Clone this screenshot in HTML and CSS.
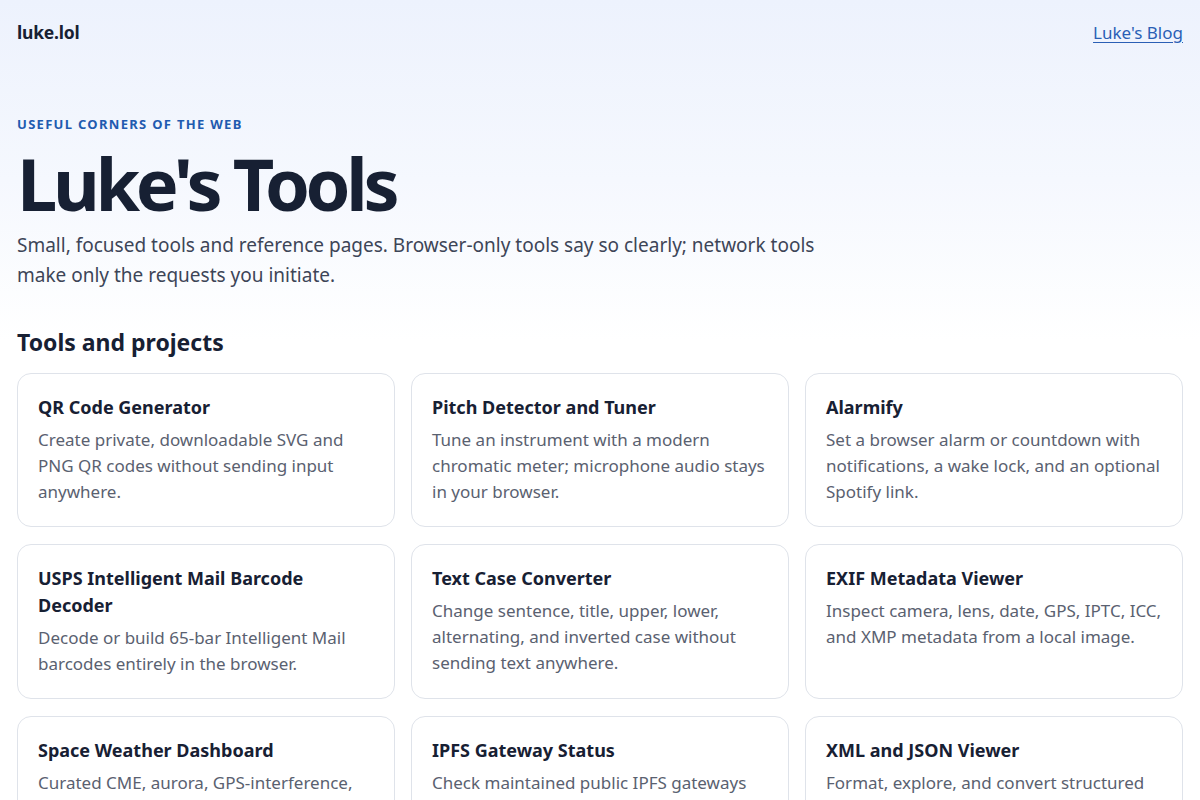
FILE: index.html
```html
<!DOCTYPE html>
<html lang="en">
<head>
<meta charset="utf-8">
<title>Luke's Tools</title>
<link rel="stylesheet" href="styles.css">
</head>
<body>
<div class="page">
  <header class="site-header">
    <a class="brand" href="#">luke.lol</a>
    <a class="blog-link" href="#">Luke's Blog</a>
  </header>
  <section class="hero">
    <p class="eyebrow">Useful corners of the web</p>
    <h1 class="title">Luke's Tools</h1>
    <p class="lede">Small, focused tools and reference pages. Browser-only tools say so clearly; network tools make only the requests you initiate.</p>
  </section>
  <section class="tools">
    <h2 class="section-title">Tools and projects</h2>
    <div class="grid">
      <a class="card" href="#">
        <h3 class="card-title">QR Code Generator</h3>
        <p class="card-desc">Create private, downloadable SVG and PNG QR codes without sending input anywhere.</p>
      </a>
      <a class="card" href="#">
        <h3 class="card-title">Pitch Detector and Tuner</h3>
        <p class="card-desc">Tune an instrument with a modern chromatic meter; microphone audio stays in your browser.</p>
      </a>
      <a class="card" href="#">
        <h3 class="card-title">Alarmify</h3>
        <p class="card-desc">Set a browser alarm or countdown with notifications, a wake lock, and an optional Spotify link.</p>
      </a>
      <a class="card" href="#">
        <h3 class="card-title">USPS Intelligent Mail Barcode Decoder</h3>
        <p class="card-desc">Decode or build 65-bar Intelligent Mail barcodes entirely in the browser.</p>
      </a>
      <a class="card" href="#">
        <h3 class="card-title">Text Case Converter</h3>
        <p class="card-desc">Change sentence, title, upper, lower, alternating, and inverted case without sending text anywhere.</p>
      </a>
      <a class="card" href="#">
        <h3 class="card-title">EXIF Metadata Viewer</h3>
        <p class="card-desc">Inspect camera, lens, date, GPS, IPTC, ICC, and XMP metadata from a local image.</p>
      </a>
      <a class="card" href="#">
        <h3 class="card-title">Space Weather Dashboard</h3>
        <p class="card-desc">Curated CME, aurora, GPS-interference, and solar wind data from public forecast feeds.</p>
      </a>
      <a class="card" href="#">
        <h3 class="card-title">IPFS Gateway Status</h3>
        <p class="card-desc">Check maintained public IPFS gateways from your browser and compare response times.</p>
      </a>
      <a class="card" href="#">
        <h3 class="card-title">XML and JSON Viewer</h3>
        <p class="card-desc">Format, explore, and convert structured data locally without uploading it anywhere.</p>
      </a>
    </div>
  </section>
</div>
</body>
</html>
```

FILE: styles.css
```css
* { box-sizing: border-box; }

html, body {
  margin: 0;
  padding: 0;
}

body {
  font-family: "Noto Sans", "DejaVu Sans", sans-serif;
  color: #172033;
  background: linear-gradient(180deg, #edf2fd 0px, #f5f8fe 180px, #ffffff 340px);
  background-repeat: no-repeat;
  background-color: #ffffff;
  min-height: 100vh;
}

.page {
  max-width: 1166px;
  margin: 0 auto;
}

.site-header {
  display: flex;
  justify-content: space-between;
  align-items: center;
  height: 64px;
}

.brand {
  font-size: 17.5px;
  font-weight: 700;
  color: #172033;
  text-decoration: none;
  letter-spacing: -0.2px;
}

.blog-link {
  font-size: 17px;
  color: #2a5fb5;
  text-decoration: underline;
  text-underline-offset: 3px;
  text-decoration-thickness: 1px;
}

.hero {
  padding-top: 51px;
}

.eyebrow {
  margin: 0;
  font-size: 13px;
  font-weight: 700;
  letter-spacing: 0.1em;
  text-transform: uppercase;
  color: #1f5bb0;
  line-height: 18px;
}

.title {
  margin: 6px 0 0;
  font-size: 72px;
  line-height: 88px;
  font-weight: 700;
  letter-spacing: -4.3px;
  color: #172033;
}

.lede {
  margin: 4px 0 0;
  max-width: 820px;
  font-size: 19px;
  line-height: 29.5px;
  color: #3d4557;
}

.tools {
  padding-top: 36px;
}

.section-title {
  margin: 0 0 15px;
  font-size: 23px;
  line-height: 32px;
  font-weight: 700;
  color: #172033;
}

.grid {
  display: grid;
  grid-template-columns: repeat(3, 1fr);
  gap: 17px 16px;
}

.card {
  display: block;
  background: #ffffff;
  border: 1px solid #dfe3ea;
  border-radius: 14px;
  padding: 20px 20px 21px;
  text-decoration: none;
  color: inherit;
}

.card-title {
  margin: 0;
  font-size: 18px;
  line-height: 27px;
  font-weight: 700;
  color: #172033;
}

.card-desc {
  margin: 6px 0 0;
  font-size: 17px;
  line-height: 26px;
  color: #5a6170;
}
```
